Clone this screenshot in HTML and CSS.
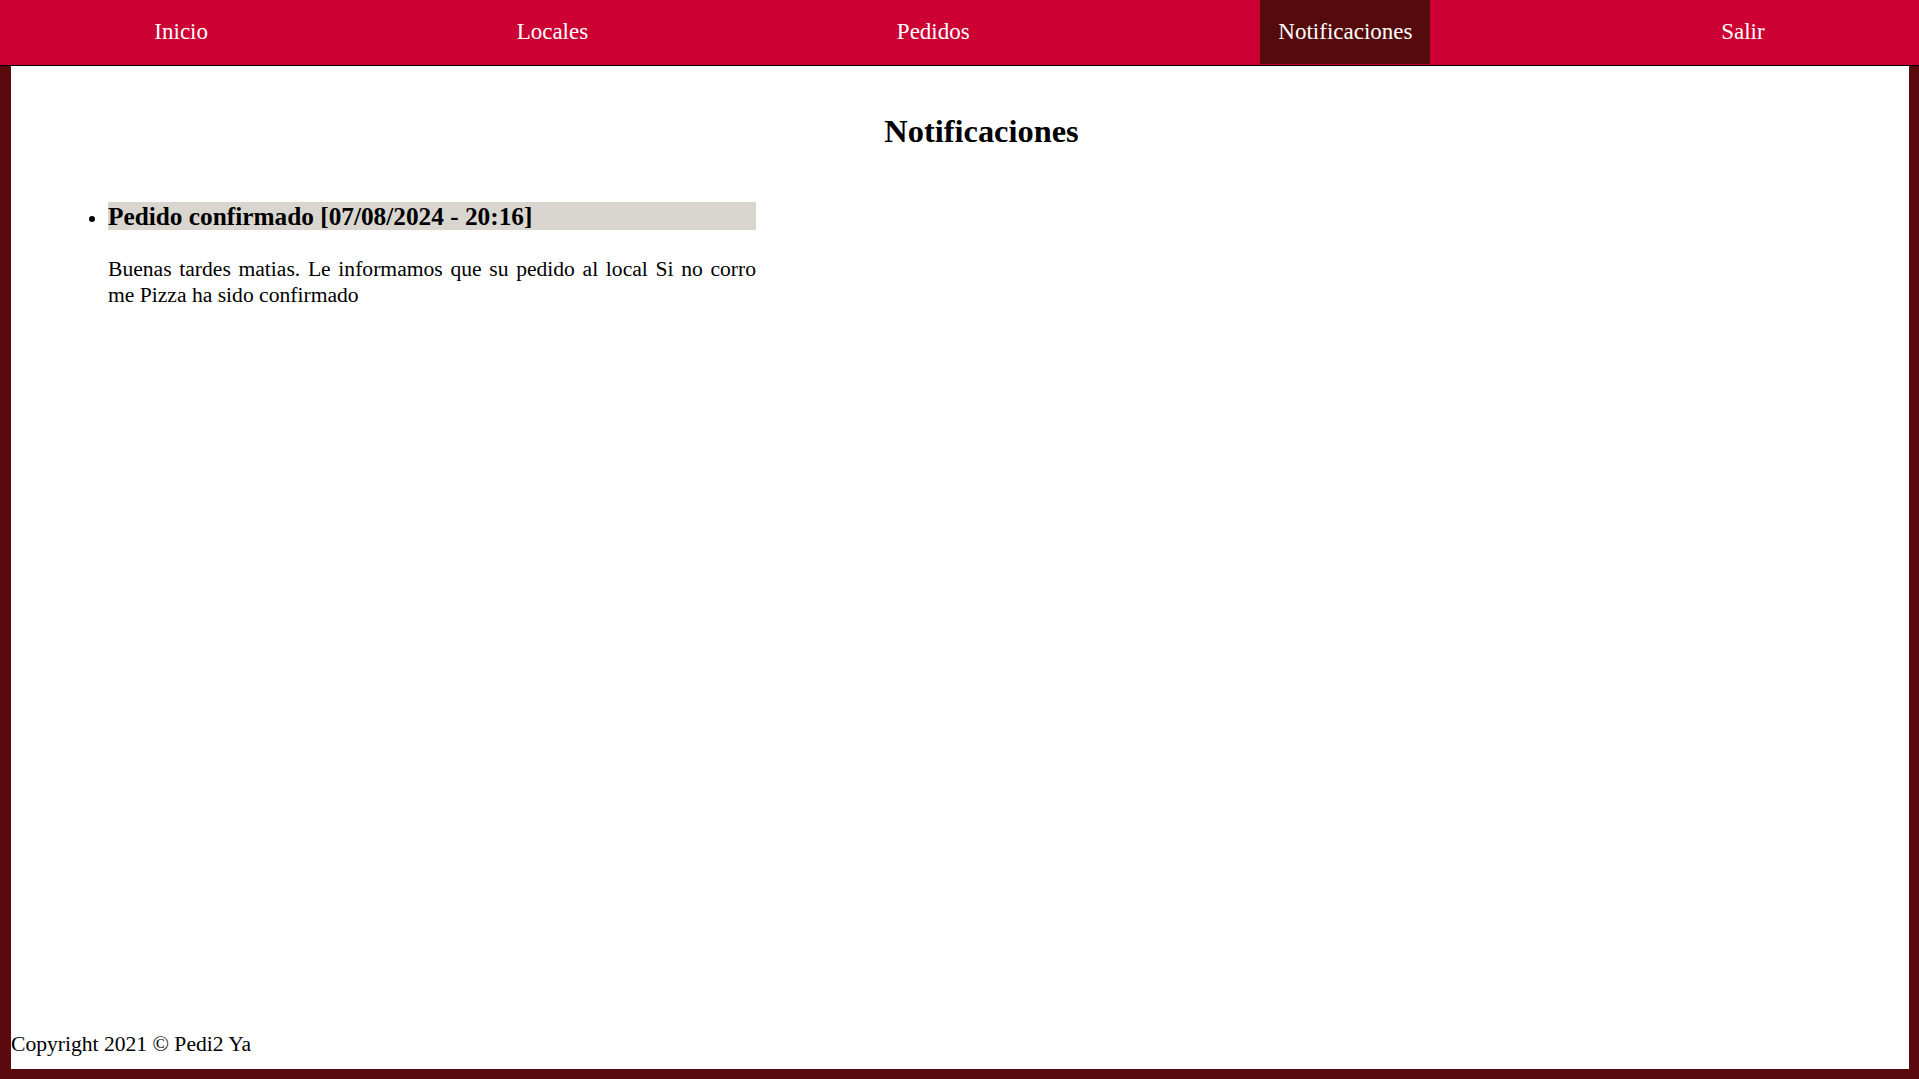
FILE: index.html
```html
<!DOCTYPE html>
<html lang="es">
<head>
<meta charset="utf-8">
<title>Notificaciones</title>
<link rel="stylesheet" href="styles.css">
</head>
<body>
<nav class="nav">
  <a class="nav-item" href="#">Inicio</a>
  <a class="nav-item" href="#">Locales</a>
  <a class="nav-item" href="#">Pedidos</a>
  <a class="nav-item active" href="#">Notificaciones</a>
  <a class="nav-item" href="#">Salir</a>
</nav>
<div class="page">
  <main class="main">
    <h2 class="title">Notificaciones</h2>
    <ul class="list">
      <li class="notif">
        <h3 class="notif-title">Pedido confirmado [07/08/2024 - 20:16]</h3>
        <p class="notif-text">Buenas tardes matias. Le informamos que su pedido al local Si no corro me Pizza ha sido confirmado</p>
      </li>
    </ul>
  </main>
  <footer class="footer">Copyright 2021 © Pedi2 Ya</footer>
</div>
</body>
</html>
```
FILE: styles.css
```css
html, body {
  margin: 0;
  padding: 0;
  height: 100%;
}
body {
  background: #5a0a0e;
  font-family: "Liberation Serif", "Times New Roman", serif;
  font-size: 21.6px;
  color: #000;
  display: flex;
  flex-direction: column;
}
.nav {
  display: flex;
  justify-content: space-around;
  align-items: flex-start;
  height: 65px;
  background: #cc0033;
  border-bottom: 1px solid #000;
  flex: none;
}
.nav-item {
  height: 64px;
  line-height: 63px;
  padding: 0 18px;
  color: #fff;
  text-decoration: none;
  font-size: 23px;
}
.nav-item.active {
  background: #550a0c;
}
.page {
  flex: 1;
  background: #fff;
  margin: 0 10px 10px 11px;
  display: flex;
  flex-direction: column;
}
.main {
  flex: 1;
}
.title {
  margin: 47px 0 0 43px;
  text-align: center;
  font-size: 32.4px;
  font-weight: bold;
  line-height: 37px;
}
.list {
  margin: 52px 0 0 0;
  padding-left: 97px;
  width: 648px;
}
.notif-title {
  margin: 0;
  background: #d9d6d0;
  font-size: 25.3px;
  line-height: 28px;
  font-weight: bold;
}
.notif-text {
  margin: 26px 0 0 0;
  text-align: justify;
  line-height: 26px;
}
.footer {
  line-height: 25px;
  padding-bottom: 12px;
}
```
